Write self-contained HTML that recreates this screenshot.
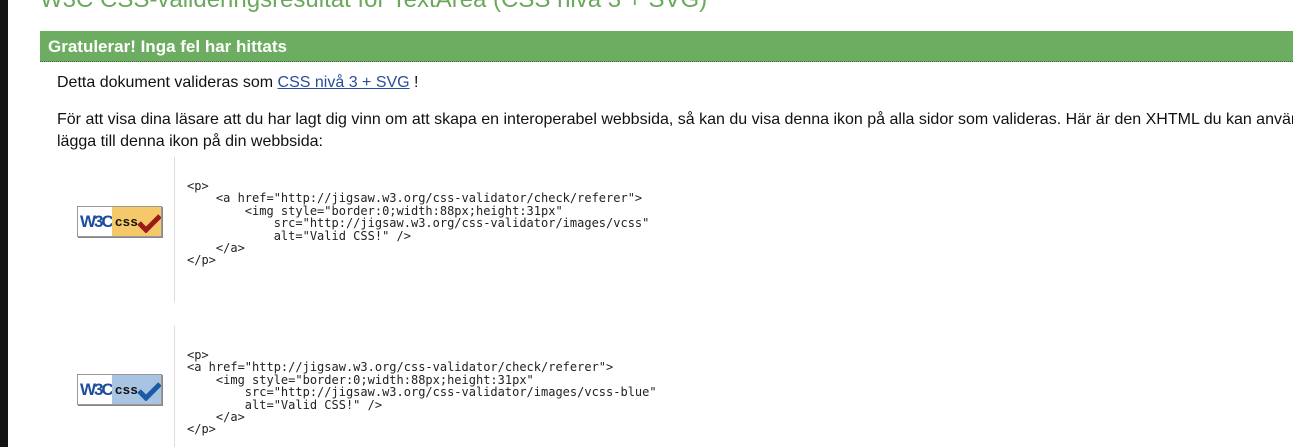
<!DOCTYPE html>
<html><head><meta charset="utf-8"><style>
body{margin:0;width:1293px;height:447px;overflow:hidden;background:#fff;position:relative;font-family:"Liberation Sans",sans-serif}
.strip{position:absolute;left:0;top:0;width:8px;height:447px;background:#141414}
.title{position:absolute;left:40px;top:-14px;font-size:24px;color:#6aa85c;white-space:nowrap}
.bar{position:absolute;left:40px;top:31px;width:1253px;height:30px;background:#6dad62;border-bottom:1px dotted #3d6b35}
.bar span{position:absolute;left:8px;top:6px;color:#fff;font-weight:bold;font-size:17px}
.p{position:absolute;left:57px;font-size:16px;color:#111;white-space:nowrap;line-height:22px}
.p a{color:#2a4d9b}
.vl{position:absolute;left:174px;width:1px;background:#ddd}
pre{position:absolute;left:187px;margin:0;font-family:"DejaVu Sans Mono",monospace;font-size:12px;line-height:12.4px;color:#222}
.badge{position:absolute;left:77px;width:83px;height:29px;border:1px solid #999;box-shadow:1px 1px 0 #888;background:#fff;overflow:hidden}
.badge .w{position:absolute;left:2px;top:5px;font-size:17px;font-weight:bold;color:#1c4e9c;letter-spacing:-2px}
.badge .c{position:absolute;left:34px;top:0;width:49px;height:29px}
.badge .c b{position:absolute;left:3px;top:7px;font-size:13px;color:#111;font-weight:900;letter-spacing:0.5px}
</style></head><body>
<div class="strip"></div>
<div class="title">W3C CSS-valideringsresultat för TextArea (CSS nivå 3 + SVG)</div>
<div class="bar"><span>Gratulerar! Inga fel har hittats</span></div>
<div class="p" style="top:72px">Detta dokument valideras som <a href="#">CSS nivå 3 + SVG</a> !</div>
<div class="p" style="top:109px">För att visa dina läsare att du har lagt dig vinn om att skapa en interoperabel webbsida, så kan du visa denna ikon på alla sidor som valideras. Här är den XHTML du kan använda för att<br>lägga till denna ikon på din webbsida:</div>
<div class="vl" style="top:157px;height:145px"></div>
<div class="vl" style="top:326px;height:121px"></div>
<div class="badge" style="top:206px"><span class="w">W3C</span><div class="c" style="background:#f5c96a"><b>css</b>
<svg style="position:absolute;left:24px;top:6px" width="26" height="20"><path d="M3 10 L10 17 L24 3" stroke="#9b1b1b" stroke-width="5" fill="none"/></svg></div></div>
<pre style="top:180px">&lt;p&gt;
    &lt;a href="http://jigsaw.w3.org/css-validator/check/referer"&gt;
        &lt;img style="border:0;width:88px;height:31px"
            src="http://jigsaw.w3.org/css-validator/images/vcss"
            alt="Valid CSS!" /&gt;
    &lt;/a&gt;
&lt;/p&gt;</pre>
<div class="badge" style="top:374px"><span class="w">W3C</span><div class="c" style="background:#a9c4e0"><b>css</b>
<svg style="position:absolute;left:24px;top:6px" width="26" height="20"><path d="M3 10 L10 17 L24 3" stroke="#1d5aa6" stroke-width="5" fill="none"/></svg></div></div>
<pre style="top:349px">&lt;p&gt;
&lt;a href="http://jigsaw.w3.org/css-validator/check/referer"&gt;
    &lt;img style="border:0;width:88px;height:31px"
        src="http://jigsaw.w3.org/css-validator/images/vcss-blue"
        alt="Valid CSS!" /&gt;
    &lt;/a&gt;
&lt;/p&gt;</pre>
</body></html>
